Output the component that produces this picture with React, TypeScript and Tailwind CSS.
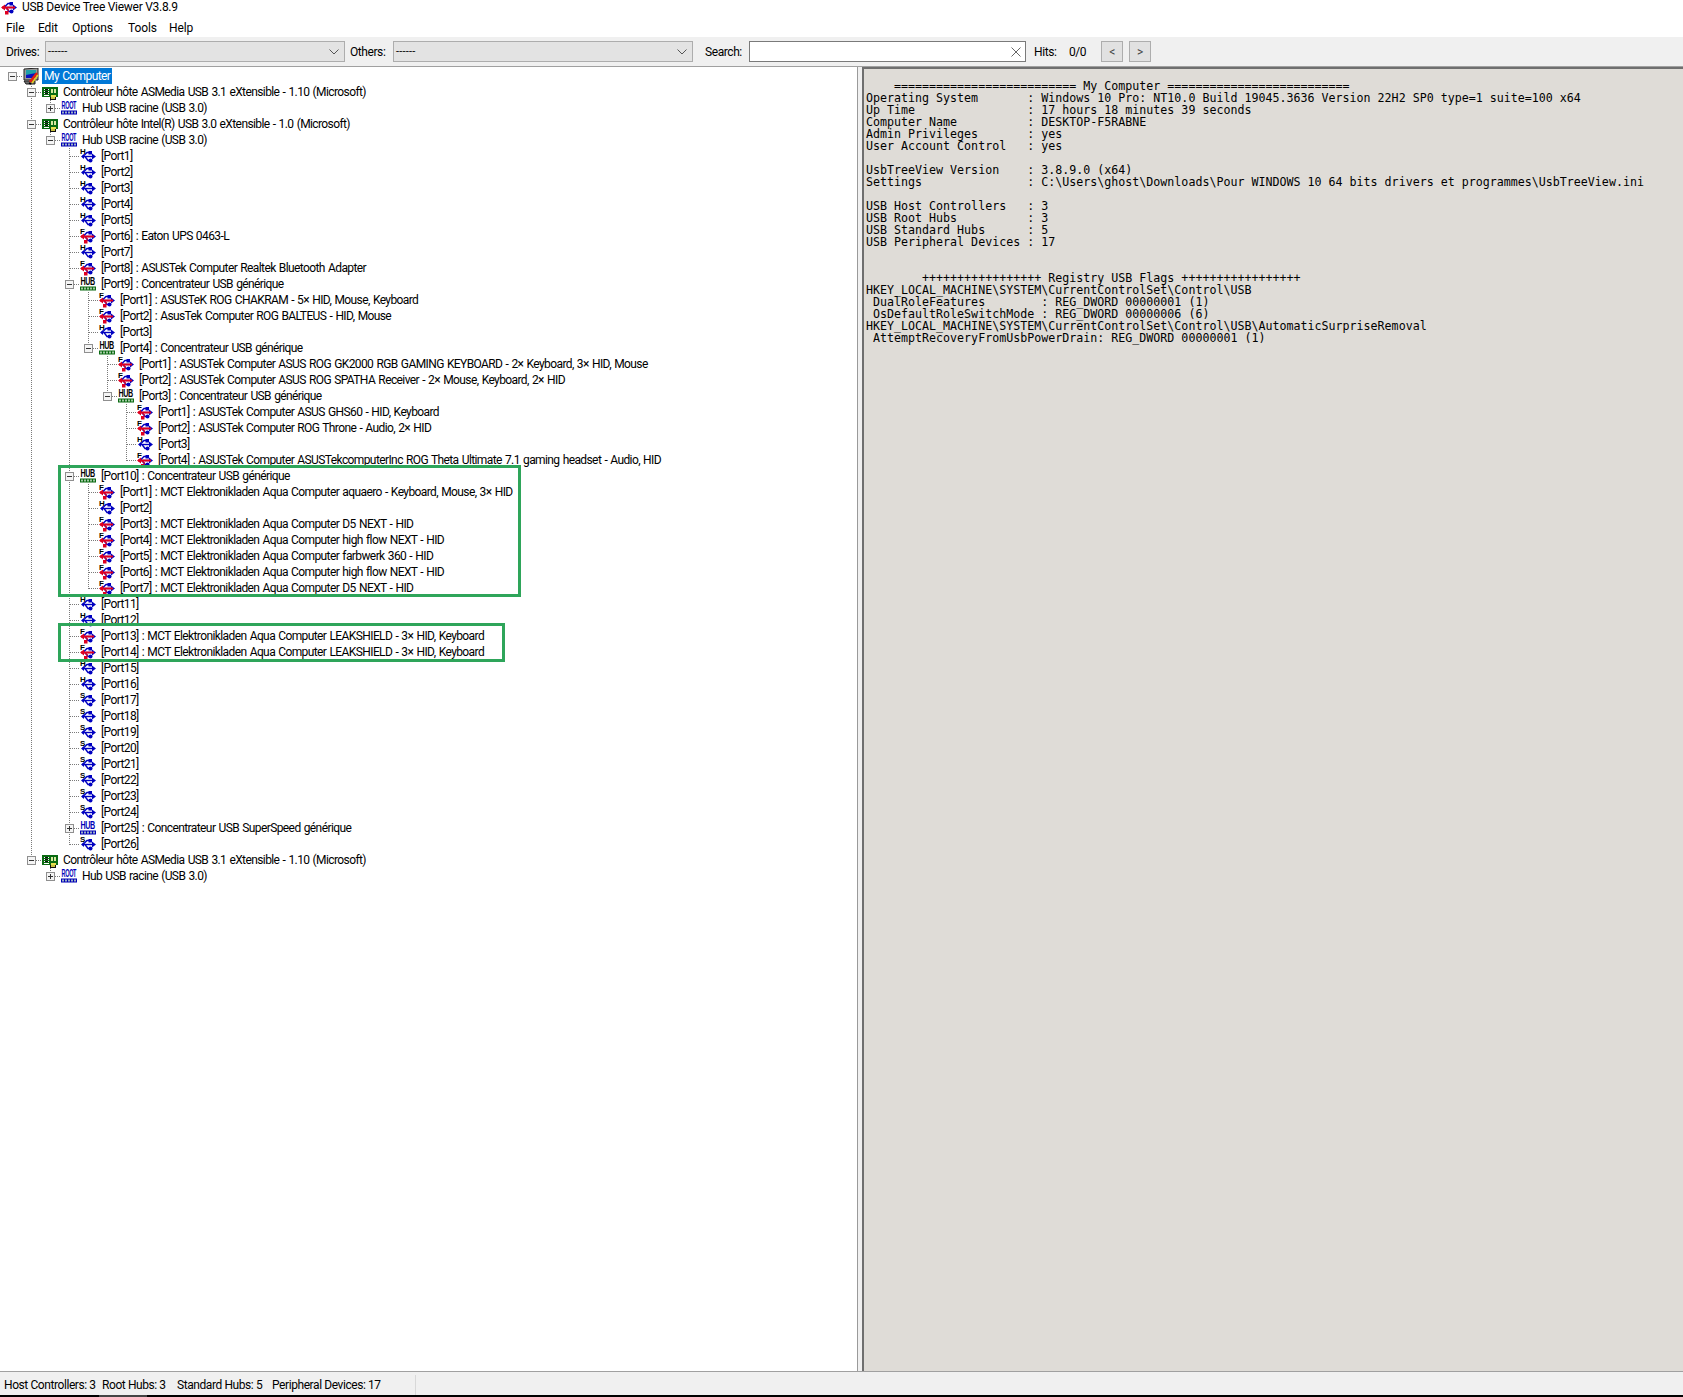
import React from 'react';

type Kind = 'computer' | 'controller' | 'root' | 'hub' | 'hubblue' | 'H' | 'S' | 'F';

type TreeNode = {
  label: string;
  kind: Kind;
  collapsed?: boolean;
  children?: TreeNode[];
};

const port = (n: number | string, kind: 'H' | 'S' | 'F' = 'H', info?: string): TreeNode => ({
  label: info ? `[Port${n}] : ${info}` : `[Port${n}]`,
  kind,
});

const hubPort = (n: number, children?: TreeNode[], label = 'Concentrateur USB générique', kind: Kind = 'hub'): TreeNode => ({
  label: `[Port${n}] : ${label}`,
  kind,
  children,
});

const aqua = 'MCT Elektronikladen Aqua Computer';

const tree: TreeNode = {
  label: 'My Computer',
  kind: 'computer',
  children: [
    {
      label: 'Contrôleur hôte ASMedia USB 3.1 eXtensible - 1.10 (Microsoft)',
      kind: 'controller',
      children: [{ label: 'Hub USB racine (USB 3.0)', kind: 'root', collapsed: true, children: [] }],
    },
    {
      label: 'Contrôleur hôte Intel(R) USB 3.0 eXtensible - 1.0 (Microsoft)',
      kind: 'controller',
      children: [
        {
          label: 'Hub USB racine (USB 3.0)',
          kind: 'root',
          children: [
            port(1),
            port(2),
            port(3),
            port(4),
            port(5),
            port(6, 'F', 'Eaton UPS 0463-L'),
            port(7),
            port(8, 'F', 'ASUSTek Computer Realtek Bluetooth Adapter'),
            hubPort(9, [
              port(1, 'F', 'ASUSTeK ROG CHAKRAM - 5× HID, Mouse, Keyboard'),
              port(2, 'F', 'AsusTek Computer ROG BALTEUS - HID, Mouse'),
              port(3),
              hubPort(4, [
                port(1, 'F', 'ASUSTek Computer ASUS ROG GK2000 RGB GAMING KEYBOARD - 2× Keyboard, 3× HID, Mouse'),
                port(2, 'F', 'ASUSTek Computer ASUS ROG SPATHA Receiver - 2× Mouse, Keyboard, 2× HID'),
                hubPort(3, [
                  port(1, 'F', 'ASUSTek Computer ASUS GHS60 - HID, Keyboard'),
                  port(2, 'F', 'ASUSTek Computer ROG Throne - Audio, 2× HID'),
                  port(3),
                  port(4, 'F', 'ASUSTek Computer ASUSTekcomputerInc ROG Theta Ultimate 7.1 gaming headset - Audio, HID'),
                ]),
              ]),
            ]),
            hubPort(10, [
              port(1, 'F', `${aqua} aquaero - Keyboard, Mouse, 3× HID`),
              port(2),
              port(3, 'F', `${aqua} D5 NEXT - HID`),
              port(4, 'F', `${aqua} high flow NEXT - HID`),
              port(5, 'F', `${aqua} farbwerk 360 - HID`),
              port(6, 'F', `${aqua} high flow NEXT - HID`),
              port(7, 'F', `${aqua} D5 NEXT - HID`),
            ]),
            port(11),
            port(12),
            port(13, 'F', `${aqua} LEAKSHIELD - 3× HID, Keyboard`),
            port(14, 'F', `${aqua} LEAKSHIELD - 3× HID, Keyboard`),
            port(15),
            port(16),
            port(17, 'S'),
            port(18, 'S'),
            port(19, 'S'),
            port(20, 'S'),
            port(21, 'S'),
            port(22, 'S'),
            port(23, 'S'),
            port(24, 'S'),
            { ...hubPort(25, [], 'Concentrateur USB SuperSpeed générique', 'hubblue'), collapsed: true },
            port(26, 'S'),
          ],
        },
      ],
    },
    {
      label: 'Contrôleur hôte ASMedia USB 3.1 eXtensible - 1.10 (Microsoft)',
      kind: 'controller',
      children: [{ label: 'Hub USB racine (USB 3.0)', kind: 'root', collapsed: true, children: [] }],
    },
  ],
};

const report = `
    ========================== My Computer ==========================
Operating System       : Windows 10 Pro: NT10.0 Build 19045.3636 Version 22H2 SP0 type=1 suite=100 x64
Up Time                : 17 hours 18 minutes 39 seconds
Computer Name          : DESKTOP-F5RABNE
Admin Privileges       : yes
User Account Control   : yes

UsbTreeView Version    : 3.8.9.0 (x64)
Settings               : C:\\Users\\ghost\\Downloads\\Pour WINDOWS 10 64 bits drivers et programmes\\UsbTreeView.ini

USB Host Controllers   : 3
USB Root Hubs          : 3
USB Standard Hubs      : 5
USB Peripheral Devices : 17


        +++++++++++++++++ Registry USB Flags +++++++++++++++++
HKEY_LOCAL_MACHINE\\SYSTEM\\CurrentControlSet\\Control\\USB
 DualRoleFeatures        : REG_DWORD 00000001 (1)
 OsDefaultRoleSwitchMode : REG_DWORD 00000006 (6)
HKEY_LOCAL_MACHINE\\SYSTEM\\CurrentControlSet\\Control\\USB\\AutomaticSurpriseRemoval
 AttemptRecoveryFromUsbPowerDrain: REG_DWORD 00000001 (1)`;

function UsbGlyph({ letter, red }: { letter: string; red?: boolean }) {
  const blue = '#0000c0';
  return (
    <svg width="16" height="16" viewBox="0 0 16 16" className="block shrink-0 overflow-visible">
      <text x="0" y="5.5" fontSize="8" fontFamily="Liberation Sans" fontWeight="700" fill="#000">
        {letter}
      </text>
      <path d="M2 8.5H13" stroke={blue} strokeWidth="1.4" />
      <path d="M3 8.5L7 4.5H10M5 8.5L8 12.5H10" stroke={blue} strokeWidth="1.4" fill="none" />
      <rect x="8.5" y="3" width="3.5" height="3.5" fill={blue} />
      <circle cx="10.5" cy="12.5" r="2" fill={blue} />
      <path d="M12 5.5L16 8.5L12 11.5Z" fill={blue} />
      <path d="M1 8.5L4 6V11Z" fill={blue} />
      {red && (
        <>
          <path d="M1 8.5H14" stroke="#e00020" strokeWidth="2" />
          <path d="M0 8.5L4 5.5V11.5Z" fill="#e00020" />
          <path d="M5 9L8 11.5" stroke="#e00020" strokeWidth="1.2" />
          <rect x="4" y="12" width="3.5" height="3.5" fill="#e00020" />
        </>
      )}
    </svg>
  );
}

function HubGlyph({ text, color, bar, squeeze }: { text: string; color: string; bar: string; squeeze: number }) {
  return (
    <svg width="16" height="16" viewBox="0 0 16 16" className="block shrink-0 overflow-visible">
      <g transform={`translate(0.5 8.5) scale(${squeeze} 1)`}>
        <text fontSize="11" fontFamily="Liberation Sans" fontWeight="700" fill={color}>
          {text}
        </text>
      </g>
      <rect x="0" y="10.5" width="16" height="4" fill={bar} />
      <path d="M1 12.5H15" stroke="#c8e0c8" strokeWidth="2" strokeDasharray="2 1" opacity="0.8" />
    </svg>
  );
}

function ControllerGlyph() {
  return (
    <svg width="16" height="16" viewBox="0 0 16 16" className="block shrink-0">
      <rect x="0" y="3" width="16" height="10" fill="#0a6b12" />
      <path d="M2 5H7M2 7H7M2 9H7M2 11H7" stroke="#ffffff" strokeWidth="1" shapeRendering="crispEdges" />
      <path d="M3 5H6M3 7H6M3 9H6" stroke="#101010" strokeWidth="1" shapeRendering="crispEdges" />
      <rect x="9" y="5" width="2" height="4" fill="#d8e8a0" />
      <rect x="12" y="5" width="2" height="4" fill="#d8e8a0" />
      <rect x="9" y="11" width="5" height="2" fill="#e8e050" />
      <rect x="8" y="13" width="6" height="3" fill="#101010" />
      <rect x="9" y="13" width="4" height="2" fill="#c8c040" />
    </svg>
  );
}

function ComputerGlyph() {
  return (
    <svg width="16" height="17" viewBox="0 0 16 17" className="block shrink-0">
      <path d="M1 1L15 0V12L1 12Z" fill="#9a9a9a" stroke="#202020" />
      <rect x="3" y="2" width="10" height="8" fill="#0a10c0" />
      <path d="M3 2H13V5L3 7Z" fill="#1fa0a8" />
      <path d="M1 13H12V16H3Z" fill="#707070" stroke="#202020" />
      <path d="M14 5L7 14" stroke="#e02010" strokeWidth="2.5" />
      <path d="M15 7L9 15" stroke="#e8d020" strokeWidth="1.5" />
      <path d="M6 15L8 16" stroke="#000" strokeWidth="1.5" />
    </svg>
  );
}

function NodeIcon({ kind }: { kind: Kind }) {
  if (kind === 'computer') return <ComputerGlyph />;
  if (kind === 'controller') return <ControllerGlyph />;
  if (kind === 'root') return <HubGlyph text="ROOT" color="#0000b8" bar="#0000b8" squeeze={0.5} />;
  if (kind === 'hub') return <HubGlyph text="HUB" color="#000" bar="#0a6b12" squeeze={0.65} />;
  if (kind === 'hubblue') return <HubGlyph text="HUB" color="#0000b8" bar="#0000b8" squeeze={0.65} />;
  return <UsbGlyph letter={kind} red={kind === 'F'} />;
}

const dots = { stroke: '#7a7a7a', strokeDasharray: '1 1', shapeRendering: 'crispEdges' as const };

// one 19px column of the tree gutter
function Gutter({ mode, last, expander }: { mode: 'pass' | 'none' | 'node' | 'rootnode'; last?: boolean; expander?: 'minus' | 'plus' }) {
  return (
    <svg width="19" height="16" className="block shrink-0">
      {mode === 'pass' && <line x1="9.5" y1="0" x2="9.5" y2="16" {...dots} />}
      {mode === 'node' && <line x1="9.5" y1="0" x2="9.5" y2={last ? 9 : 16} {...dots} />}
      {(mode === 'node' || mode === 'rootnode') && <line x1="10" y1="8.5" x2="19" y2="8.5" {...dots} />}
      {expander && (
        <g shapeRendering="crispEdges">
          <rect x="5.5" y="4.5" width="8" height="8" fill="#f4f4f4" stroke="#8f8f8f" />
          <line x1="7" y1="8.5" x2="12" y2="8.5" stroke="#333" />
          {expander === 'plus' && <line x1="9.5" y1="6" x2="9.5" y2="11" stroke="#333" />}
        </g>
      )}
    </svg>
  );
}

type FlatRow = { node: TreeNode; rails: boolean[]; last: boolean; depth: number };

function flatten(node: TreeNode, rails: boolean[], last: boolean, depth: number, out: FlatRow[]) {
  out.push({ node, rails, last, depth });
  if (node.collapsed) return out;
  (node.children ?? []).forEach((child, i, list) => {
    flatten(child, depth === 0 ? [false] : [...rails, !last], i === list.length - 1, depth + 1, out);
  });
  return out;
}

function TreeRow({ row }: { row: FlatRow }) {
  const { node, rails, last, depth } = row;
  const hasKids = node.children !== undefined;
  const selected = depth === 0;
  return (
    <div className="flex h-4 items-center pl-[3px] whitespace-nowrap tracking-[-0.6px] [word-spacing:0.8px]">
      {rails.map((on, i) => (
        <Gutter key={i} mode={on ? 'pass' : 'none'} />
      ))}
      <Gutter
        mode={depth === 0 ? 'rootnode' : 'node'}
        last={last}
        expander={hasKids ? (node.collapsed ? 'plus' : 'minus') : undefined}
      />
      <div className="ml-px">
        <NodeIcon kind={node.kind} />
      </div>
      <span className={selected ? 'ml-[3px] bg-[#0078d7] px-[2px] text-white leading-4' : 'ml-[3px] px-[2px] leading-4'}>
        {node.label}
      </span>
    </div>
  );
}

function Combo() {
  return (
    <div className="flex h-[21px] w-[300px] items-center justify-between border border-[#adadad] bg-[#e3e3e3] pl-[2px] pr-[5px]">
      <span className="text-[11px] leading-none tracking-[0.2px]">------</span>
      <svg width="10" height="6" viewBox="0 0 10 6" className="block">
        <path d="M0.5 0.5L5 5L9.5 0.5" fill="none" stroke="#555" />
      </svg>
    </div>
  );
}

function SmallButton({ label }: { label: string }) {
  return (
    <div className="flex h-[21px] w-[22px] items-center justify-center border border-[#adadad] bg-[#e1e1e1] text-[#444]">{label}</div>
  );
}

export default function App() {
  const rows = flatten(tree, [], true, 0, []);
  return (
    <div className="relative flex h-[1397px] w-[1683px] flex-col overflow-hidden bg-white text-[12px] tracking-[-0.42px] text-black [font-family:Roboto,sans-serif]">
      {/* title */}
      <div className="flex h-[14px] items-center">
        <div className="ml-[1px] mr-[5px]">
          <UsbGlyph letter="" red />
        </div>
        <span className="tracking-[-0.27px]">USB Device Tree Viewer V3.8.9</span>
      </div>

      {/* menu */}
      <div className="flex h-[23px] items-center pl-[6px] pt-[5px] tracking-[-0.1px]">
        <span className="w-[32px]">File</span>
        <span className="w-[34px]">Edit</span>
        <span className="w-[56px]">Options</span>
        <span className="w-[41px]">Tools</span>
        <span>Help</span>
      </div>

      {/* toolbar */}
      <div className="flex h-[30px] items-center border-b border-[#a0a0a0] bg-[#f0f0f0] pl-[6px]">
        <span className="w-[39px]">Drives:</span>
        <Combo />
        <span className="ml-[5px] w-[43px]">Others:</span>
        <Combo />
        <span className="ml-[12px] w-[44px]">Search:</span>
        <div className="flex h-[21px] w-[277px] items-center justify-end border border-[#7a7a7a] bg-white pr-[4px]">
          <svg width="10" height="10" viewBox="0 0 10 10" className="block">
            <path d="M0.5 0.5L9.5 9.5M9.5 0.5L0.5 9.5" stroke="#666" />
          </svg>
        </div>
        <span className="ml-[8px] w-[35px]">Hits:</span>
        <span className="w-[32px]">0/0</span>
        <SmallButton label="<" />
        <div className="ml-[6px]">
          <SmallButton label=">" />
        </div>
      </div>

      {/* panes */}
      <div className="flex min-h-0 flex-1">
        <div className="w-[858px] shrink-0 overflow-hidden border-r border-[#9a9a9a] pt-[1px]">
          {rows.map((row, i) => (
            <TreeRow key={i} row={row} />
          ))}
        </div>
        <div className="w-[4px] shrink-0 bg-[#f0f0f0]" />
        <div className="min-w-0 flex-1 overflow-hidden border-l-2 border-t-2 border-[#6f6f6f] bg-[#dfdcd7] pl-[2px]">
          <pre className="-mt-px text-[11.65px] leading-[12px] tracking-normal [font-family:'DejaVu_Sans_Mono',monospace]">{report}</pre>
        </div>
      </div>

      {/* status */}
      <div className="flex h-[24px] items-center whitespace-nowrap border-t border-[#a0a0a0] bg-[#f0f0f0] pl-[4px] pt-[3px]">
        <span className="w-[98px]">Host Controllers: 3</span>
        <span className="w-[75px]">Root Hubs: 3</span>
        <span className="w-[95px]">Standard Hubs: 5</span>
        <span className="w-[143px]">Peripheral Devices: 17</span>
        <div className="h-[20px] w-px bg-[#d8d8d8]" />
      </div>
      <div className="flex h-[2px] bg-black">
        <div className="ml-[99px] w-[48px] bg-[#444]" />
      </div>

      {/* annotations drawn over the screenshot */}
      <div className="absolute left-[58px] top-[465px] h-[132px] w-[463px] border-[3px] border-[#2ea55a]" />
      <div className="absolute left-[58px] top-[623px] h-[39px] w-[447px] border-[3px] border-[#2ea55a]" />
    </div>
  );
}
